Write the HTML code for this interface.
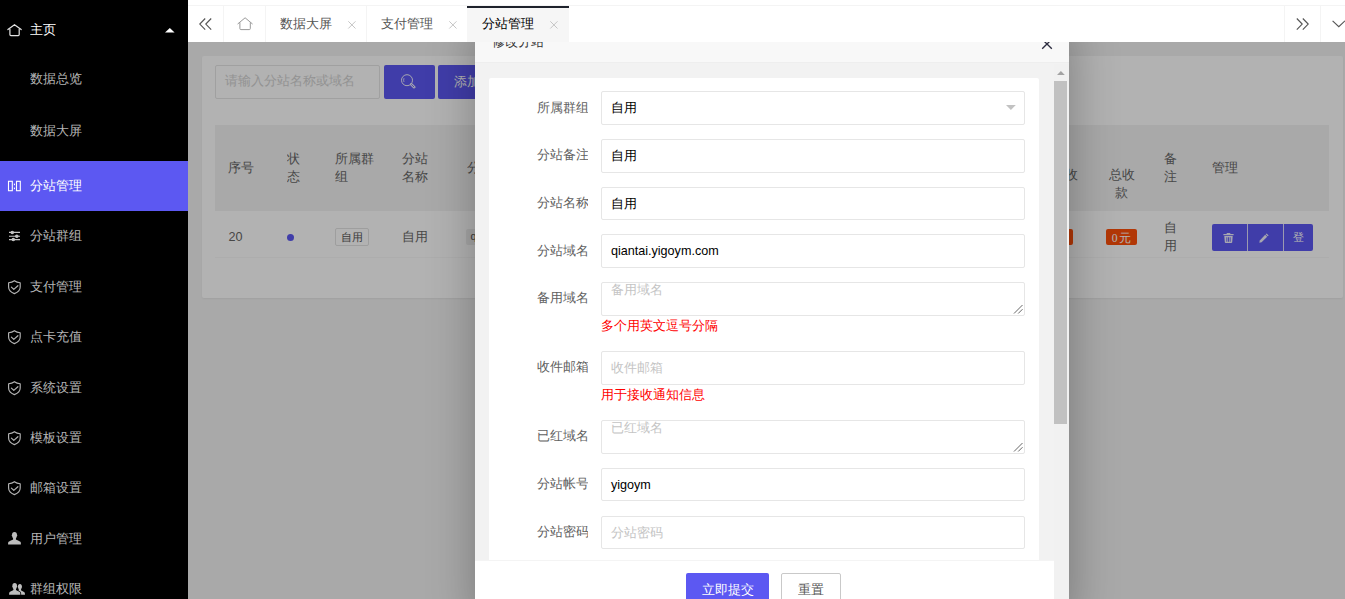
<!DOCTYPE html>
<html lang="zh">
<head>
<meta charset="utf-8">
<title>分站管理</title>
<style>
*{box-sizing:border-box;margin:0;padding:0}
html,body{width:1345px;height:599px;overflow:hidden;background:#f2f2f2}
body{font-family:"Liberation Sans",sans-serif;font-size:12.6px;color:#666;position:relative}
svg{display:block;position:absolute;overflow:visible}
#side{position:absolute;left:0;top:0;width:188px;height:599px;background:#000;z-index:30;overflow:hidden}
.mi{position:absolute;left:0;width:188px;height:50.4px;line-height:50.4px;color:rgba(255,255,255,.72);white-space:nowrap}
.mi>span{position:absolute;left:30.4px;top:0;width:120px;overflow:hidden}
.mi.on{background:#5c58f2;color:#fff}
.mi.w{color:#fff}
#main{position:absolute;left:188px;top:0;width:1168.3px;height:599px;background:#f2f2f2}
#card{position:absolute;left:14.3px;width:1140.4px;top:56px;height:241.5px;background:#fff;border-radius:2px;box-shadow:0 1px 2px rgba(0,0,0,.05)}
#shade{position:absolute;left:0;top:0;width:1345px;height:599px;background:rgba(0,0,0,.3);z-index:20}
#tabs{position:absolute;left:188px;top:0;width:1168.3px;height:42.2px;background:#fff;z-index:40}
#tabs .ln{position:absolute;left:0;top:5px;width:100%;height:1px;background:#f4f4f4}
#tabs .vs{position:absolute;top:6px;width:1px;height:36.2px;background:#f4f4f4}
.tab{position:absolute;top:6px;height:36.2px;line-height:35px;color:#555;white-space:nowrap;overflow:hidden}
.tab b{font-weight:normal;position:absolute;left:14.4px;top:0.7px;width:60px;overflow:hidden}
.tab.act{background:#f6f6f6;color:#000}
.tab.act:before{content:"";position:absolute;left:0;top:0;width:100%;height:2px;background:#1e222c}
#modal{position:absolute;left:475px;top:24.3px;width:594px;height:600px;background:#f2f2f2;z-index:35;box-shadow:1px 1px 45px rgba(0,0,0,.3)}
#mtitle{position:absolute;left:0;top:0;width:594px;height:38.7px;background:#f8f8f8;border-bottom:1px solid #eee;color:#333;line-height:37.8px}
#mcard{position:absolute;left:14px;top:53.7px;width:550px;height:520px;background:#fff;border-radius:2px}
.lab{position:absolute;left:0;width:98.7px;text-align:right;color:#606060;white-space:nowrap;overflow:hidden;line-height:17px;height:17px}
.inp{position:absolute;left:112.3px;width:423.8px;height:33.6px;border:1px solid #e6e6e6;border-radius:2px;background:#fff;color:#000;line-height:33.4px;padding-left:8.6px;white-space:nowrap;overflow:hidden}
.inp.ph{color:#c4c4c4}
.aux{position:absolute;left:112.3px;color:#f00;white-space:nowrap;line-height:17px;height:17px;width:200px;overflow:hidden}
#foot{position:absolute;left:0;top:536.3px;width:578.5px;height:64px;background:#fff;box-shadow:0 -1px 0 #f4f4f4}
.btn{position:absolute;top:12.5px;height:34.2px;line-height:35px;border-radius:2px;text-align:center;white-space:nowrap;overflow:hidden}
.c{position:absolute;white-space:nowrap;overflow:hidden}
#sinp{left:27.1px;top:65.1px;width:164.6px;height:33.6px;border:1px solid #e6e6e6;border-radius:2px;background:#fff;color:#d2d2d2;line-height:31.6px;padding-left:9px}
.pbtn{background:#5c58f2;color:#fff;border-radius:2px;height:33.9px;top:65px;line-height:34.4px}
#thead{left:27.3px;top:125.2px;width:1113.7px;height:85.4px;background:#f2f2f2}
#trow{left:27.3px;top:210.6px;width:1113.7px;height:47.4px;border-bottom:1px solid #f8f8f8}
.th,.td{position:absolute;color:#666;line-height:18.0px;white-space:nowrap;overflow:hidden}
.tc{text-align:center}
.j{display:inline-block;text-align:justify;text-align-last:justify;white-space:nowrap}
</style>
</head>
<body>
<div id="main">
<div id="card"></div>
<div class="c" id="sinp"><span class="j" style="width:126.0px">请输入分站名称或域名</span></div>
<div class="c pbtn" style="left:195.9px;width:51.1px"><svg style="left:0;top:0" width="51" height="34"><g fill="none" stroke="#fff" opacity=".9"><circle cx="23" cy="15.2" r="5.5" stroke-width="1"/><path d="M20 13.2 Q19.2 15.2 20 17" stroke-width="0.8"/><path d="M27.2 19.3 L30.2 22.2" stroke-width="2.6" stroke-linecap="round"/></g><path d="M27.5 19.6 L29.9 21.9" stroke="#5c58f2" stroke-width="0.9" stroke-linecap="round"/></svg></div>
<div class="c pbtn" style="left:249.9px;width:82.8px;padding-left:16.2px"><span class="j" style="width:50.4px">添加分站</span></div>
<div class="c" id="thead"></div><div class="c" id="trow"></div>
<div class="th " style="left:40.4px;top:158.7px;width:40px;height:18.0px;"><span class="j" style="width:25.2px">序号</span></div>
<div class="th " style="left:99.2px;top:149.7px;width:30px;height:36.0px;">状<br>态</div>
<div class="th " style="left:146.6px;top:149.7px;width:50px;height:36.0px;"><span class="j" style="width:37.8px">所属群</span><br>组</div>
<div class="th " style="left:214.4px;top:149.7px;width:40px;height:36.0px;"><span class="j" style="width:25.2px">分站</span><br><span class="j" style="width:25.2px">名称</span></div>
<div class="th " style="left:278.6px;top:158.7px;width:60px;height:18.0px;"><span class="j" style="width:50.4px">分站域名</span></div>
<div class="th " style="left:877.0px;top:166.4px;width:14px;height:18.0px;">收</div>
<div class="th tc" style="left:918.5px;top:166.4px;width:30px;height:36.0px;"><span class="j" style="width:25.2px">总收</span><br>款</div>
<div class="th " style="left:976.2px;top:149.7px;width:20px;height:36.0px;">备<br>注</div>
<div class="th " style="left:1024.0px;top:158.7px;width:40px;height:18.0px;"><span class="j" style="width:25.2px">管理</span></div>
<div class="td " style="left:40.4px;top:227.8px;width:30px;height:18.0px;"><span class="j" style="width:25.2px">20</span></div>
<div class="c" style="left:98.85px;top:233.85px;width:7.3px;height:7.3px;border-radius:50%;background:#5c58f2"></div>
<div class="c tc" style="left:147.2px;top:228.4px;width:33.8px;height:17.2px;border:1px solid #e2e2e2;border-radius:2px;font-size:10.8px;line-height:16.4px;color:#555;background:#fff"><span class="j" style="width:21.6px">自用</span></div>
<div class="td " style="left:214.4px;top:227.8px;width:40px;height:18.0px;"><span class="j" style="width:25.2px">自用</span></div>
<div class="c" style="left:278.0px;top:229.3px;width:120px;height:15.5px;background:#eee;border-radius:2px;font-size:10.8px;line-height:15px;color:#555;padding-left:4.5px">qiantai.yigoym.com</div>
<div class="c tc" style="left:854.0px;width:31px;top:228.9px;height:16.1px;background:#ff4f0a;border-radius:2px;font-size:11.6px;line-height:17px;color:#fff"><span style="font-family:'Liberation Serif',serif;margin-right:2px">0</span>元</div>
<div class="c tc" style="left:918.0px;width:31.1px;top:228.9px;height:16.1px;background:#ff4f0a;border-radius:2px;font-size:11.6px;line-height:17px;color:#fff"><span style="font-family:'Liberation Serif',serif;margin-right:2px">0</span>元</div>
<div class="td " style="left:976.2px;top:218.8px;width:20px;height:36.0px;">自<br>用</div>
<div class="c" style="left:1024.1px;top:224.1px;width:100.8px;height:26.8px;background:#5c58f2;border-radius:2px"></div>
<div class="c" style="left:1059.2px;top:224.1px;width:1px;height:26.8px;background:rgba(255,255,255,.8)"></div>
<div class="c" style="left:1095.3px;top:224.1px;width:1px;height:26.8px;background:rgba(255,255,255,.8)"></div>
<svg style="left:1034.6px;top:233px" width="11" height="10"><g fill="#fff" opacity=".9"><path d="M3.7 0 H7.3 V1 H10.6 V2.2 H0.4 V1 H3.7 Z"/><path d="M1.3 3 H9.7 L9.2 9.2 Q9.1 10 8.3 10 H2.7 Q1.9 10 1.8 9.2 Z M3.4 4.2 V8.8 H4.3 V4.2 Z M5.05 4.2 V8.8 H5.95 V4.2 Z M6.7 4.2 V8.8 H7.6 V4.2 Z" fill-rule="evenodd"/></g></svg>
<svg style="left:1071.0px;top:233px" width="10" height="10"><g fill="#fff" opacity=".9"><path d="M7.6 0.4 L9.6 2.4 L8.7 3.3 L6.7 1.3 Z"/><path d="M6.2 1.8 L8.2 3.8 L2.6 9.2 L0.3 9.7 L0.8 7.4 Z"/></g></svg>
<div class="c tc" style="left:1096.0px;top:224.1px;width:29px;height:26.8px;line-height:26.6px;color:#fff;font-size:10.8px">登</div>
</div>
<div id="shade"></div>
<div id="side">
<div class="mi w" style="top:5.4px"><svg style="left:0;top:0" width="30" height="50"><g fill="none" stroke="#e2e2e2" stroke-width="1.2" stroke-linecap="round" stroke-linejoin="round"><path d="M7.9 24.6 L14.5 19.7 L21.2 24.6"/><path d="M9.9 24.2 V29.6 Q9.9 30.6 10.9 30.6 H18.2 Q19.2 30.6 19.2 29.6 V24.2"/></g></svg><svg style="left:165px;top:22.8px" width="10" height="5"><path d="M0 4.6 L4.8 0 L9.6 4.6 Z" fill="#fff"/></svg><span><span class="j" style="width:25.2px">主页</span></span></div>
<div class="mi " style="top:53.7px"><span><span class="j" style="width:50.4px">数据总览</span></span></div>
<div class="mi " style="top:105.7px"><span><span class="j" style="width:50.4px">数据大屏</span></span></div>
<div class="mi on" style="top:161px"><svg style="left:0;top:0" width="30" height="50"><g fill="none" stroke="#fff" stroke-width="1.1"><rect x="8.5" y="20.3" width="3.8" height="9.4"/><rect x="16.5" y="20.3" width="3.8" height="9.4"/></g><rect x="13.9" y="22.6" width="1.1" height="1.6" fill="#fff"/><rect x="13.9" y="26.6" width="1.1" height="1.6" fill="#fff"/></svg><span><span class="j" style="width:50.4px">分站管理</span></span></div>
<div class="mi " style="top:211.4px"><svg style="left:0;top:0" width="30" height="50"><g stroke="#c4c4c4" stroke-width="1.1" fill="#c4c4c4"><path d="M9 21.4 H20 M9 25.2 H20 M9 28.6 H20"/><circle cx="12.3" cy="21.4" r="1.2"/><circle cx="16.8" cy="25.2" r="1.2"/><circle cx="13.3" cy="28.6" r="1.2"/></g></svg><span><span class="j" style="width:50.4px">分站群组</span></span></div>
<div class="mi " style="top:261.8px"><svg style="left:0;top:0" width="30" height="50"><g fill="none" stroke="#b4b4b4" stroke-width="1.15" stroke-linejoin="round" stroke-linecap="round"><path d="M14.4 18.7 C12.7 19.9 10.7 20.5 8.6 20.7 V25 C8.6 28.2 11.2 30.4 14.4 31.6 C17.6 30.4 20.2 28.2 20.2 25 V20.7 C18.1 20.5 16.1 19.9 14.4 18.7 Z"/><path d="M11.4 25.1 L13.8 27.4 L17.9 23.7"/></g></svg><span><span class="j" style="width:50.4px">支付管理</span></span></div>
<div class="mi " style="top:312.2px"><svg style="left:0;top:0" width="30" height="50"><g fill="none" stroke="#b4b4b4" stroke-width="1.15" stroke-linejoin="round" stroke-linecap="round"><path d="M14.4 18.7 C12.7 19.9 10.7 20.5 8.6 20.7 V25 C8.6 28.2 11.2 30.4 14.4 31.6 C17.6 30.4 20.2 28.2 20.2 25 V20.7 C18.1 20.5 16.1 19.9 14.4 18.7 Z"/><path d="M11.4 25.1 L13.8 27.4 L17.9 23.7"/></g></svg><span><span class="j" style="width:50.4px">点卡充值</span></span></div>
<div class="mi " style="top:362.6px"><svg style="left:0;top:0" width="30" height="50"><g fill="none" stroke="#b4b4b4" stroke-width="1.15" stroke-linejoin="round" stroke-linecap="round"><path d="M14.4 18.7 C12.7 19.9 10.7 20.5 8.6 20.7 V25 C8.6 28.2 11.2 30.4 14.4 31.6 C17.6 30.4 20.2 28.2 20.2 25 V20.7 C18.1 20.5 16.1 19.9 14.4 18.7 Z"/><path d="M11.4 25.1 L13.8 27.4 L17.9 23.7"/></g></svg><span><span class="j" style="width:50.4px">系统设置</span></span></div>
<div class="mi " style="top:413.0px"><svg style="left:0;top:0" width="30" height="50"><g fill="none" stroke="#b4b4b4" stroke-width="1.15" stroke-linejoin="round" stroke-linecap="round"><path d="M14.4 18.7 C12.7 19.9 10.7 20.5 8.6 20.7 V25 C8.6 28.2 11.2 30.4 14.4 31.6 C17.6 30.4 20.2 28.2 20.2 25 V20.7 C18.1 20.5 16.1 19.9 14.4 18.7 Z"/><path d="M11.4 25.1 L13.8 27.4 L17.9 23.7"/></g></svg><span><span class="j" style="width:50.4px">模板设置</span></span></div>
<div class="mi " style="top:463.4px"><svg style="left:0;top:0" width="30" height="50"><g fill="none" stroke="#b4b4b4" stroke-width="1.15" stroke-linejoin="round" stroke-linecap="round"><path d="M14.4 18.7 C12.7 19.9 10.7 20.5 8.6 20.7 V25 C8.6 28.2 11.2 30.4 14.4 31.6 C17.6 30.4 20.2 28.2 20.2 25 V20.7 C18.1 20.5 16.1 19.9 14.4 18.7 Z"/><path d="M11.4 25.1 L13.8 27.4 L17.9 23.7"/></g></svg><span><span class="j" style="width:50.4px">邮箱设置</span></span></div>
<div class="mi " style="top:513.8px"><svg style="left:0;top:0" width="30" height="50"><path fill="#bdbdbd" transform="translate(0,-1.2)" d="M14.5 19.2 C16.2 19.2 17 20.4 17 22 C17.4 22.2 17.4 23 16.9 23.4 C16.7 24.4 16.2 25.2 15.9 25.6 V26.8 C16.8 27.6 19.4 28.2 20.4 29 C20.9 29.5 20.9 30.6 20.9 31.6 H8.1 C8.1 30.6 8.1 29.5 8.6 29 C9.6 28.2 12.2 27.6 13.1 26.8 V25.6 C12.8 25.2 12.3 24.4 12.1 23.4 C11.6 23 11.6 22.2 12 22 C12 20.4 12.8 19.2 14.5 19.2 Z"/></svg><span><span class="j" style="width:50.4px">用户管理</span></span></div>
<div class="mi " style="top:564.2px"><svg style="left:0;top:0" width="30" height="50"><g fill="#bdbdbd" transform="translate(0,-1.2)"><path d="M14.7 20.2 C16.2 20.2 17 21.3 17 22.9 C17.3 23.1 17.3 23.8 16.9 24.2 C16.7 25.1 16.3 25.8 16 26.2 V27.2 C16.8 27.9 18.9 28.5 19.8 29.3 C20.3 29.8 20.4 30.8 20.4 32 H9.1 C9.1 30.8 9.2 29.8 9.7 29.3 C10.6 28.5 12.6 27.9 13.4 27.2 V26.2 C13.1 25.8 12.7 25.1 12.5 24.2 C12.1 23.8 12.1 23.1 12.4 22.9 C12.4 21.3 13.2 20.2 14.7 20.2 Z"/><path d="M19.9 21.2 C21.2 21.2 21.9 22.2 21.9 23.6 C22.2 23.8 22.2 24.4 21.8 24.8 C21.6 25.6 21.3 26.2 21 26.6 V27.5 C21.7 28.1 23.6 28.7 24.4 29.4 C24.9 29.9 25 30.9 25 32 H21.2 C21.2 30.6 21 29.6 20.4 28.9 C19.9 28.4 19.1 28.1 18.4 27.7 L18.8 27.5 V26.6 C18.5 26.2 18.2 25.6 18 24.8 C17.6 24.4 17.6 23.8 17.9 23.6 C17.9 22.2 18.6 21.2 19.9 21.2 Z"/></g></svg><span><span class="j" style="width:50.4px">群组权限</span></span></div>
</div>
<div id="modal">
<div id="mtitle"><span style="position:absolute;left:16.8px;top:0;width:70px;overflow:hidden;white-space:nowrap"><span class="j" style="width:50.4px">修改分站</span></span><svg style="left:567.2px;top:15px" width="10" height="10"><path d="M0.2 0.2 L9.8 9.8 M9.8 0.2 L0.2 9.8" stroke="#2d2d40" stroke-width="1.35" fill="none"/></svg></div>
<div id="mcard">
<div class="lab" style="top:21.7px"><span class="j" style="width:50.4px">所属群组</span></div><div class="inp" style="top:13.4px"><span class="j" style="width:25.2px">自用</span><svg style="left:403.6px;top:12.5px" width="10" height="5"><path d="M0 0 H9.8 L4.9 5 Z" fill="#c2c2c2"/></svg></div>
<div class="lab" style="top:69.4px"><span class="j" style="width:50.4px">分站备注</span></div><div class="inp" style="top:61.1px"><span class="j" style="width:25.2px">自用</span></div>
<div class="lab" style="top:117.1px"><span class="j" style="width:50.4px">分站名称</span></div><div class="inp" style="top:108.8px"><span class="j" style="width:25.2px">自用</span></div>
<div class="lab" style="top:164.8px"><span class="j" style="width:50.4px">分站域名</span></div><div class="inp" style="top:156.5px">qiantai.yigoym.com</div>
<div class="lab" style="top:212.5px"><span class="j" style="width:50.4px">备用域名</span></div><div class="inp ph" style="top:204.2px;line-height:13px;padding-top:0.5px"><span class="j" style="width:50.4px">备用域名</span><svg style="right:1px;bottom:1px;left:auto;top:auto" width="10" height="10"><path d="M1 9.5 L9.5 1 M5.2 9.5 L9.5 5.2" stroke="#555" stroke-width="0.9" fill="none"/></svg></div>
<div class="lab" style="top:281.5px"><span class="j" style="width:50.4px">收件邮箱</span></div><div class="inp ph" style="top:273.2px"><span class="j" style="width:50.4px">收件邮箱</span></div>
<div class="lab" style="top:350.5px"><span class="j" style="width:50.4px">已红域名</span></div><div class="inp ph" style="top:342.2px;line-height:13px;padding-top:0.5px"><span class="j" style="width:50.4px">已红域名</span><svg style="right:1px;bottom:1px;left:auto;top:auto" width="10" height="10"><path d="M1 9.5 L9.5 1 M5.2 9.5 L9.5 5.2" stroke="#555" stroke-width="0.9" fill="none"/></svg></div>
<div class="lab" style="top:398.2px"><span class="j" style="width:50.4px">分站帐号</span></div><div class="inp" style="top:389.9px">yigoym</div>
<div class="lab" style="top:445.9px"><span class="j" style="width:50.4px">分站密码</span></div><div class="inp ph" style="top:437.6px"><span class="j" style="width:50.4px">分站密码</span></div>
<div class="aux" style="top:239.9px"><span class="j" style="width:113.4px">多个用英文逗号分隔</span></div>
<div class="aux" style="top:308.9px"><span class="j" style="width:100.8px">用于接收通知信息</span></div>
</div>
<div style="position:absolute;left:578.6px;top:39.7px;width:15.4px;height:560px;background:#f1f1f1"></div>
<svg style="left:582.2px;top:47.2px" width="8" height="4"><path d="M0 4 L3.9 0 L7.8 4 Z" fill="#a3a3a3"/></svg>
<div style="position:absolute;left:579.3px;top:56.6px;width:12.3px;height:343px;background:#c1c1c1"></div>
<div id="foot"><div class="btn" style="left:211px;width:82.6px;background:#5c58f2;color:#fff"><span class="j" style="width:50.4px">立即提交</span></div><div class="btn" style="left:306.3px;width:59.5px;background:#fff;border:1px solid #c9c9c9;color:#555;line-height:33px"><span class="j" style="width:25.2px">重置</span></div></div>
</div>
<div id="tabs"><div class="ln"></div>
<div class="vs" style="left:35.4px"></div><div class="vs" style="left:77px"></div><div class="vs" style="left:178px"></div><div class="vs" style="left:279.6px"></div><div class="vs" style="left:1096px"></div><div class="vs" style="left:1131.8px"></div>
<svg style="left:11px;top:17.6px" width="13" height="13"><path d="M6.2 0.5 L0.8 6.1 L6.2 11.7 M12.2 0.5 L6.8 6.1 L12.2 11.7" fill="none" stroke="#555" stroke-width="1.15"/></svg>
<svg style="left:48.5px;top:16.6px" width="16" height="14"><g fill="none" stroke="#999" stroke-width="1" stroke-linejoin="round" stroke-linecap="round"><path d="M0.9 6.8 L8.1 0.8 L15.3 6.8"/><path d="M2.9 5.8 V11.6 Q2.9 12.6 3.9 12.6 H12.3 Q13.3 12.6 13.3 11.6 V5.8"/></g></svg>
<div class="tab" style="left:77.5px;width:101px"><b><span class="j" style="width:50.4px">数据大屏</span></b><svg style="left:82.7px;top:15.0px" width="8" height="8"><path d="M0.3 0.3 L7.5 7.5 M7.5 0.3 L0.3 7.5" stroke="#c2c2c2" stroke-width="0.95" fill="none"/></svg></div>
<div class="tab" style="left:178.5px;width:101px"><b><span class="j" style="width:50.4px">支付管理</span></b><svg style="left:82.7px;top:15.0px" width="8" height="8"><path d="M0.3 0.3 L7.5 7.5 M7.5 0.3 L0.3 7.5" stroke="#c2c2c2" stroke-width="0.95" fill="none"/></svg></div>
<div class="tab act" style="left:279.3px;width:101.3px"><b><span class="j" style="width:50.4px">分站管理</span></b><svg style="left:82.7px;top:15.0px" width="8" height="8"><path d="M0.3 0.3 L7.5 7.5 M7.5 0.3 L0.3 7.5" stroke="#c2c2c2" stroke-width="0.95" fill="none"/></svg></div>
<svg style="left:1107.5px;top:17.6px" width="13" height="13"><path d="M0.8 0.5 L6.2 6.1 L0.8 11.7 M6.8 0.5 L12.2 6.1 L6.8 11.7" fill="none" stroke="#555" stroke-width="1.15"/></svg>
<svg style="left:1143.5px;top:20px" width="14" height="8"><path d="M0.6 0.8 L6.8 6.6 L13 0.8" fill="none" stroke="#555" stroke-width="1.15"/></svg>
</div>
</body>
</html>
